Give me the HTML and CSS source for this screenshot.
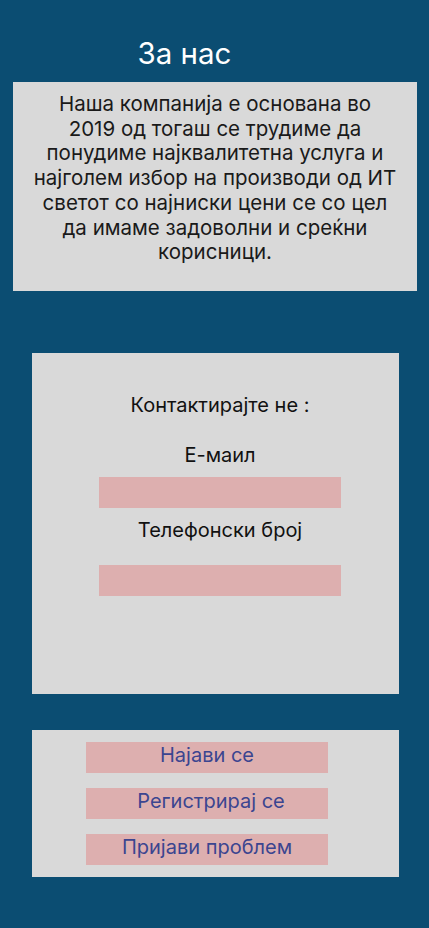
FILE: index.html
```html
<!DOCTYPE html>
<html lang="mk">
<head>
<meta charset="utf-8">
<title>За нас</title>
<link rel="stylesheet" href="styles.css">
</head>
<body>
<main class="page">
  <h1 class="title">За нас</h1>
  <section class="about">
    <p class="about-text">Наша компанија е основана во<br>2019 од тогаш се трудиме да<br>понудиме најквалитетна услуга и<br>најголем избор на производи од ИТ<br>светот со најниски цени се со цел<br>да имаме задоволни и среќни<br>корисници.</p>
  </section>
  <section class="contact">
    <p class="contact-heading">Контактирајте не :</p>
    <p class="field-label">Е-маил</p>
    <div class="field"></div>
    <p class="field-label field-label-phone">Телефонски број</p>
    <div class="field field-phone"></div>
  </section>
  <section class="actions">
    <a class="btn" href="#">Најави се</a>
    <a class="btn btn-register" href="#">Регистрирај се</a>
    <a class="btn" href="#">Пријави проблем</a>
  </section>
</main>
</body>
</html>
```

FILE: styles.css
```css
* { box-sizing: border-box; }

html, body {
  margin: 0;
  padding: 0;
  background: #0b4d72;
}

body {
  font-family: Inter, "Noto Sans", sans-serif;
  color: #111;
  min-height: 928px;
}

.page {
  display: flex;
  flex-direction: column;
  padding-top: 36px;
}

.title {
  margin: 0;
  font-size: 29.5px;
  font-weight: 400;
  line-height: 34px;
  color: #ffffff;
  text-align: center;
  padding-right: 60px;
  height: 46px;
}

.about {
  margin: 0 12px 0 13px;
  height: 209px;
  background: #d9d9d9;
  padding: 10px 4px 0;
}

.about-text {
  margin: 0;
  font-size: 20.5px;
  line-height: 24.7px;
  text-align: center;
  color: #1a1a1a;
  white-space: nowrap;
}

.contact {
  margin: 62px 30px 0 32px;
  height: 341px;
  background: #d9d9d9;
  display: flex;
  flex-direction: column;
  align-items: center;
  padding: 40px 0 0 9px;
}

.contact-heading,
.field-label {
  margin: 0;
  font-size: 20px;
  line-height: 24px;
  color: #111;
}

.field-label {
  margin-top: 26px;
}

.field {
  width: 242px;
  height: 31px;
  background: #ddafaf;
  margin-top: 10px;
}

.field-label-phone {
  margin-top: 10px;
}

.field-phone {
  margin-top: 23px;
}

.actions {
  margin: 36px 30px 0 32px;
  height: 147px;
  background: #d9d9d9;
  display: flex;
  flex-direction: column;
  gap: 15px;
  padding: 12px 0 0 54px;
}

.btn {
  display: block;
  width: 242px;
  height: 31px;
  background: #ddafaf;
  color: #3b4590;
  text-decoration: none;
  text-align: center;
  font-size: 20px;
  line-height: 27px;
}

.btn-register {
  padding-left: 8px;
}
```
